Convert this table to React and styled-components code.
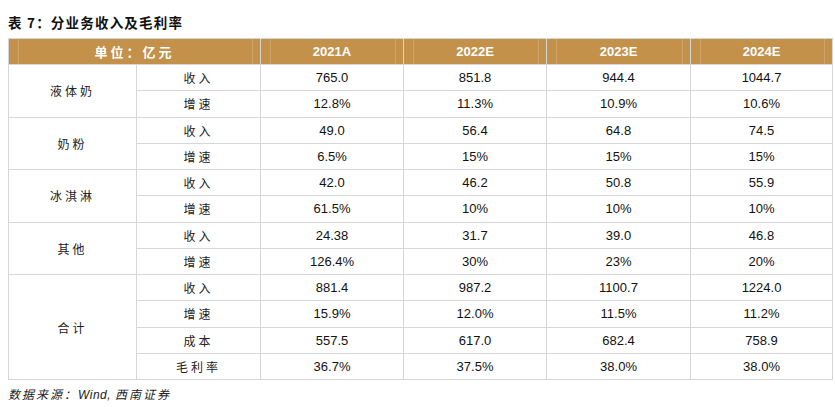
import React from "react";
import styled, { createGlobalStyle } from "styled-components";

const Global = createGlobalStyle`
  html, body { margin: 0; padding: 0; background: #fff; }
  body { font-family: "Liberation Sans", Arial, sans-serif; }
`;

const Page = styled.div`
  width: 835px;
  height: 407px;
  padding: 13px 3px 0 8px;
  box-sizing: border-box;
  display: flex;
  flex-direction: column;
`;

const Title = styled.div`
  font-family: "Noto Sans CJK SC", sans-serif;
  font-weight: 700;
  font-size: 13.5px;
  line-height: 18px;
  color: #111;
  letter-spacing: 1.2px;
  height: 25px;
  flex: none;
`;

const Table = styled.table`
  border-collapse: collapse;
  width: 824px;
  table-layout: fixed;
  border-bottom: 1.5px solid #E0984C;
  flex: none;
`;

const HeadCell = styled.th`
  position: relative;
  background: #C4914A;
  color: #fff;
  height: 25px;
  padding: 0;
  border: 1px solid #d6d6d6;
  font-weight: 700;
  font-size: 13px;
  font-family: ${(p) => (p.$cjk ? `"Noto Sans CJK SC", sans-serif` : `"Liberation Sans", Arial, sans-serif`)};
  letter-spacing: ${(p) => (p.$cjk ? "3px" : "0")};
  text-align: center;
  &::before {
    content: "";
    position: absolute;
    top: 0;
    bottom: 0;
    left: 9px;
    right: 7px;
    border-left: 1px solid rgba(255, 255, 255, 0.18);
    border-right: 1px solid rgba(255, 255, 255, 0.18);
    pointer-events: none;
  }
`;

const Cell = styled.td`
  height: 25.25px;
  padding: 0;
  border: 1px solid #d6d6d6;
  text-align: center;
  color: #111;
  font-size: 13px;
  line-height: 15px;
  font-family: "Liberation Sans", Arial, sans-serif;
`;

const LabelCell = styled(Cell)`
  font-family: "Noto Sans CJK SC", sans-serif;
  font-size: 12px;
  letter-spacing: 3px;
  color: #222;
`;

const Source = styled.div`
  margin-top: 6px;
  font-size: 12px;
  line-height: 15px;
  font-style: italic;
  color: #222;
  font-family: "Liberation Sans", "Noto Sans CJK SC", sans-serif;
  letter-spacing: 0.5px;
`;

const CjkItalic = styled.span`
  font-family: "Noto Sans CJK SC", sans-serif;
  font-style: italic;
  letter-spacing: 2px;
`;

const groups = [
  {
    name: "液体奶",
    rows: [
      ["收入", "765.0", "851.8", "944.4", "1044.7"],
      ["增速", "12.8%", "11.3%", "10.9%", "10.6%"],
    ],
  },
  {
    name: "奶粉",
    rows: [
      ["收入", "49.0", "56.4", "64.8", "74.5"],
      ["增速", "6.5%", "15%", "15%", "15%"],
    ],
  },
  {
    name: "冰淇淋",
    rows: [
      ["收入", "42.0", "46.2", "50.8", "55.9"],
      ["增速", "61.5%", "10%", "10%", "10%"],
    ],
  },
  {
    name: "其他",
    rows: [
      ["收入", "24.38", "31.7", "39.0", "46.8"],
      ["增速", "126.4%", "30%", "23%", "20%"],
    ],
  },
  {
    name: "合计",
    rows: [
      ["收入", "881.4", "987.2", "1100.7", "1224.0"],
      ["增速", "15.9%", "12.0%", "11.5%", "11.2%"],
      ["成本", "557.5", "617.0", "682.4", "758.9"],
      ["毛利率", "36.7%", "37.5%", "38.0%", "38.0%"],
    ],
  },
];

export default function App() {
  return (
    <>
      <Global />
      <Page>
        <Title>表 7：分业务收入及毛利率</Title>
        <Table>
          <colgroup>
            <col style={{ width: 128 }} />
            <col style={{ width: 124 }} />
            <col style={{ width: 143 }} />
            <col style={{ width: 143 }} />
            <col style={{ width: 144 }} />
            <col style={{ width: 142 }} />
          </colgroup>
          <thead>
            <tr>
              <HeadCell $cjk colSpan={2}>单位：亿元</HeadCell>
              <HeadCell>2021A</HeadCell>
              <HeadCell>2022E</HeadCell>
              <HeadCell>2023E</HeadCell>
              <HeadCell>2024E</HeadCell>
            </tr>
          </thead>
          <tbody>
            {groups.map((g) =>
              g.rows.map((r, i) => (
                <tr key={g.name + i}>
                  {i === 0 && <LabelCell rowSpan={g.rows.length}>{g.name}</LabelCell>}
                  <LabelCell>{r[0]}</LabelCell>
                  {r.slice(1).map((v, j) => (
                    <Cell key={j}>{v}</Cell>
                  ))}
                </tr>
              ))
            )}
          </tbody>
        </Table>
        <Source>
          <CjkItalic>数据来源：</CjkItalic>Wind, <CjkItalic>西南证券</CjkItalic>
        </Source>
      </Page>
    </>
  );
}
